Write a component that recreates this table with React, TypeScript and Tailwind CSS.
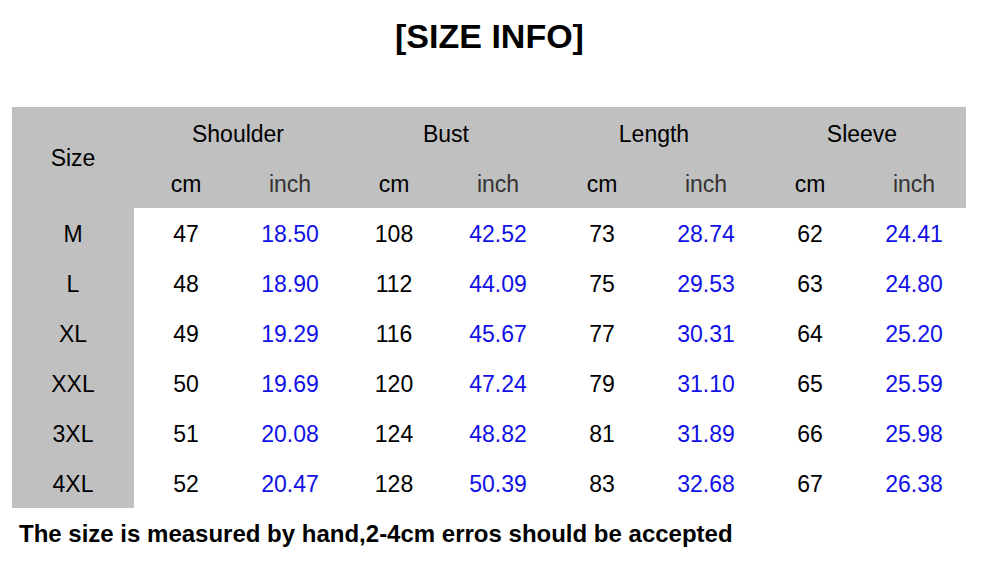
import React from "react";

const rows = [
  { size: "M", v: ["47", "18.50", "108", "42.52", "73", "28.74", "62", "24.41"] },
  { size: "L", v: ["48", "18.90", "112", "44.09", "75", "29.53", "63", "24.80"] },
  { size: "XL", v: ["49", "19.29", "116", "45.67", "77", "30.31", "64", "25.20"] },
  { size: "XXL", v: ["50", "19.69", "120", "47.24", "79", "31.10", "65", "25.59"] },
  { size: "3XL", v: ["51", "20.08", "124", "48.82", "81", "31.89", "66", "25.98"] },
  { size: "4XL", v: ["52", "20.47", "128", "50.39", "83", "32.68", "67", "26.38"] },
];

const groups = ["Shoulder", "Bust", "Length", "Sleeve"];

export default function App() {
  return (
    <div
      className="w-[981px] h-[565px] bg-white overflow-hidden text-black"
      style={{ fontFamily: '"Liberation Sans", Arial, sans-serif' }}
    >
      <div className="h-[107px] flex justify-center pt-[16px] pr-[2px]">
        <h1 className="text-[34px] leading-[40px] font-bold">[SIZE INFO]</h1>
      </div>

      <div className="ml-[12px] grid grid-cols-[122px_repeat(8,104px)] text-[23px] leading-none">
        {/* header */}
        <div className="row-span-2 bg-[#c0c0c0] flex items-center justify-center pt-[1px]">Size</div>
        {groups.map((g) => (
          <div key={g} className="col-span-2 h-[51px] bg-[#c0c0c0] flex items-center justify-center pt-[4px]">
            {g}
          </div>
        ))}
        {groups.map((g) => (
          <React.Fragment key={g + "-u"}>
            <div className="h-[50px] bg-[#c0c0c0] flex items-center justify-center pt-[2px]">cm</div>
            <div className="h-[50px] bg-[#c0c0c0] flex items-center justify-center pt-[2px] text-[#333333]">inch</div>
          </React.Fragment>
        ))}

        {/* body */}
        {rows.map((r) => (
          <React.Fragment key={r.size}>
            <div className="h-[50px] bg-[#c0c0c0] flex items-center justify-center pt-[2px]">{r.size}</div>
            {r.v.map((x, i) => (
              <div
                key={i}
                className={`h-[50px] flex items-center justify-center pt-[2px] ${i % 2 === 1 ? "text-[#1010e6]" : ""}`}
              >
                {x}
              </div>
            ))}
          </React.Fragment>
        ))}
      </div>

      <p className="mt-[14px] ml-[19px] text-[24px] leading-none font-bold">
        The size is measured by hand,2-4cm erros should be accepted
      </p>
    </div>
  );
}
